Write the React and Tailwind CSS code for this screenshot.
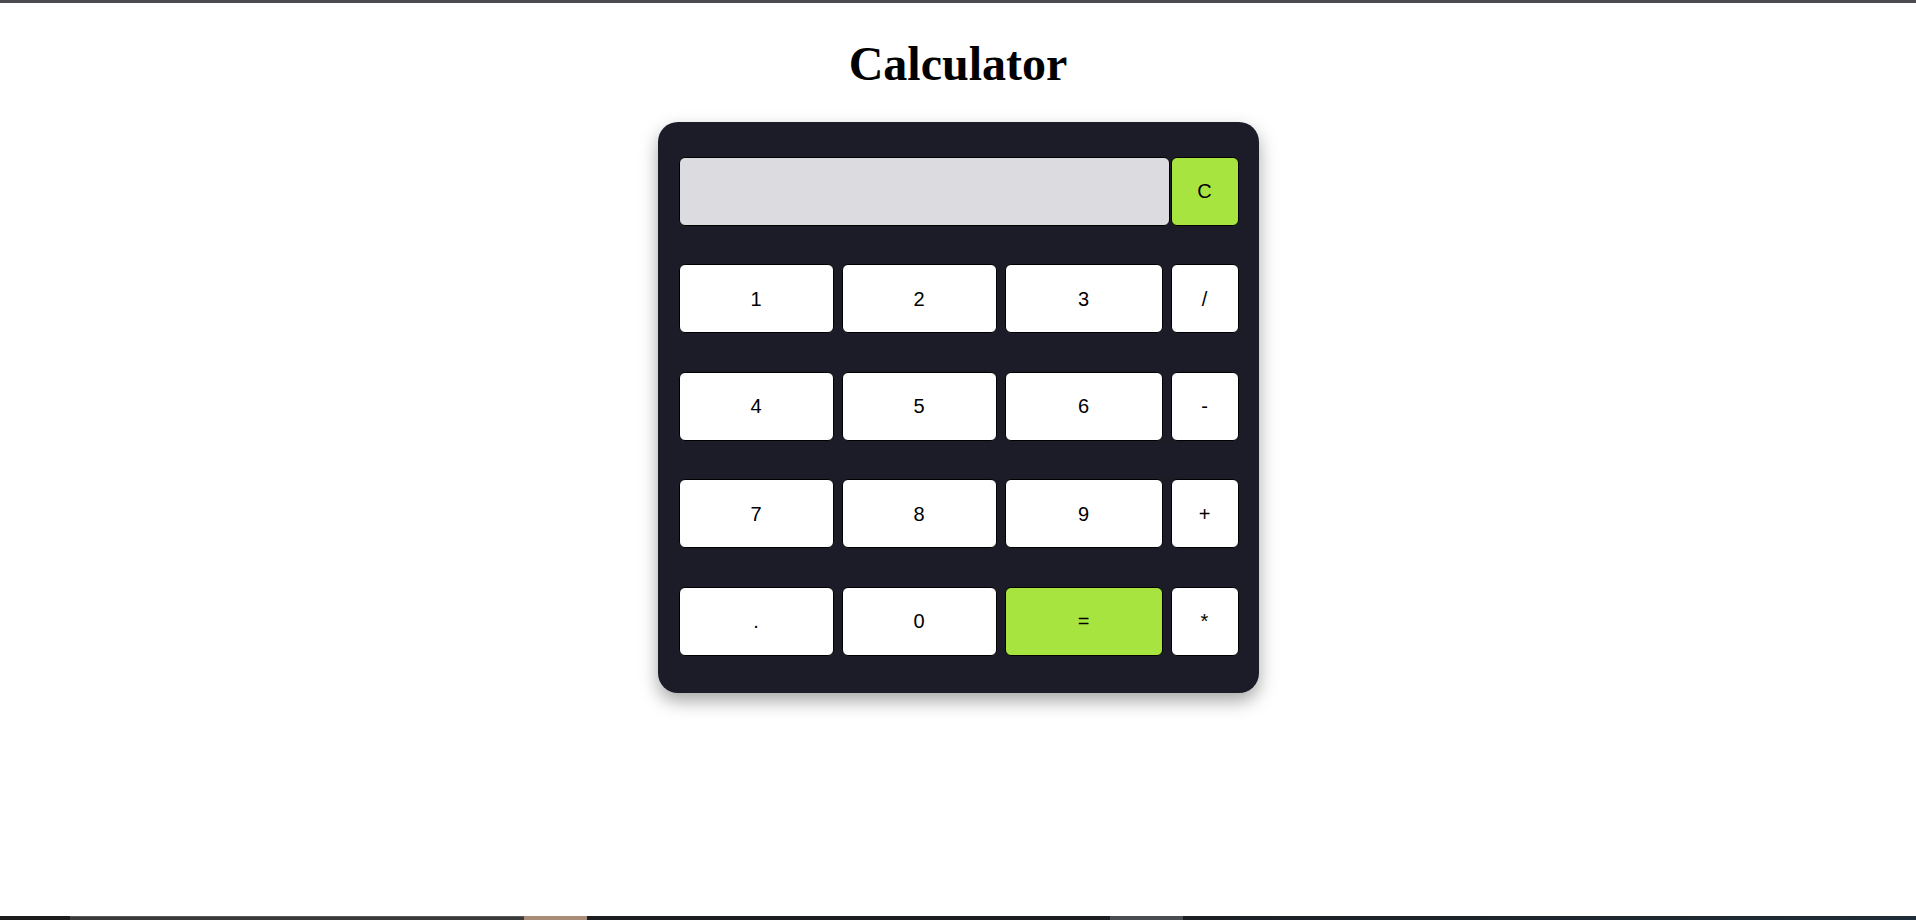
const rows = [
  ['1', '2', '3', '/'],
  ['4', '5', '6', '-'],
  ['7', '8', '9', '+'],
  ['.', '0', '=', '*'],
]

function Key({ label }) {
  const green = label === '='
  return (
    <button
      className={`h-[69px] rounded-[6px] border border-black text-[20px] text-black ${green ? 'bg-[#a8e440]' : 'bg-white'}`}
    >
      {label}
    </button>
  )
}

export default function App() {
  return (
    <div className="h-screen flex flex-col bg-white overflow-hidden" style={{ fontFamily: '"Liberation Sans", Arial, sans-serif' }}>
      <div className="h-[3px] bg-[#4b4c50]" />

      <div className="flex-1 flex flex-col items-center">
        <h1
          className="mt-[34px] text-[48px] leading-[53px] font-bold text-black"
          style={{ fontFamily: '"Liberation Serif", "Times New Roman", serif' }}
        >
          Calculator
        </h1>

        <div className="mt-[32px] w-[601px] rounded-[20px] bg-[#1b1c28] pl-[21px] pr-[20px] pt-[34.5px] pb-[37px] shadow-[0_8px_18px_rgba(0,0,0,0.35)]">
          <div className="flex flex-col gap-[38.5px]">
            <div className="flex">
              <input
                readOnly
                className="w-[491px] h-[69px] rounded-[6px] border border-black bg-[#dcdbe0] outline-none"
              />
              <button className="ml-[1px] w-[68px] h-[69px] rounded-[6px] border border-black bg-[#a8e440] text-[20px] text-black">
                C
              </button>
            </div>

            {rows.map((row, i) => (
              <div key={i} className="grid grid-cols-[155px_155px_158px_68px] gap-x-[8px]">
                {row.map((k) => <Key key={k} label={k} />)}
              </div>
            ))}
          </div>
        </div>
      </div>

      <div className="h-[4px] flex">
        <div className="w-[70px] bg-[#1c1c1c]" />
        <div className="w-[454px] bg-[#3a3a3a] border-t border-[#5a5a5a]" />
        <div className="w-[63px] bg-[#a88c78]" />
        <div className="w-[523px] bg-[#1b1d20]" />
        <div className="w-[73px] bg-[#4a4d52]" />
        <div className="flex-1 bg-gradient-to-r from-[#1b1f24] to-[#1f2d38]" />
      </div>
    </div>
  )
}
